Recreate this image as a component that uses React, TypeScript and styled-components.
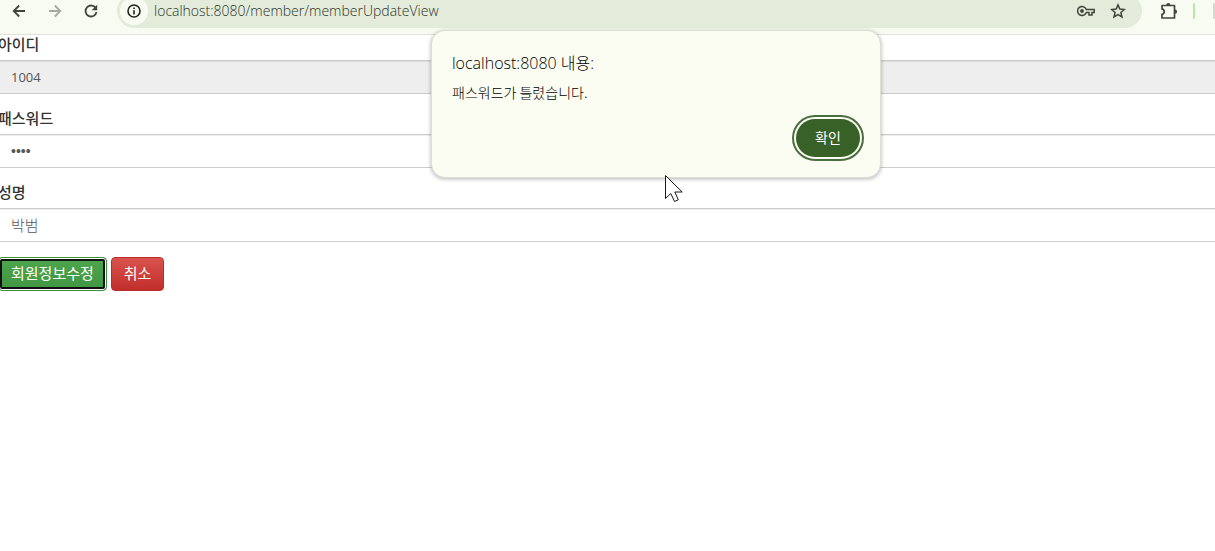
import React from "react";
import styled, { createGlobalStyle } from "styled-components";

const GlobalStyle = createGlobalStyle`
  * { box-sizing: border-box; }
  body {
    margin: 0;
    background: #fff;
    color: #333;
    font-family: "Open Sans", "Noto Sans CJK KR", sans-serif;
    font-size: 14px;
    line-height: 20px;
  }
`;

const Screen = styled.div`
  position: relative;
  min-height: 100vh;
  overflow: hidden;
`;

const Toolbar = styled.header`
  display: flex;
  align-items: flex-start;
  height: 41px;
  margin-top: -6px;
  padding-left: 1px;
  background: #f8fbf1;
  border-bottom: 1px solid #dee2d9;
`;

const IconButton = styled.button<{ $width?: number; $faded?: boolean }>`
  display: flex;
  flex: none;
  align-items: center;
  justify-content: center;
  width: ${(p) => p.$width ?? 36}px;
  height: 34px;
  padding: 0;
  border: 0;
  background: none;
  color: ${(p) => (p.$faded ? "#a5aaa0" : "#3f463c")};
`;

const AddressBar = styled.div`
  display: flex;
  flex: 1;
  align-items: center;
  height: 34px;
  margin-left: 8px;
  padding: 0 8px 0 3px;
  border-radius: 17px;
  background: #e3ecdb;
`;

const SiteInfo = styled.button`
  display: flex;
  flex: none;
  align-items: center;
  justify-content: center;
  width: 28px;
  height: 28px;
  padding: 0;
  border: 0;
  border-radius: 50%;
  background: #f8fbf1;
  color: #20251e;
`;

const Address = styled.input`
  flex: 1;
  min-width: 0;
  height: 28px;
  padding: 0 6px 2px;
  border: 0;
  outline: 0;
  background: none;
  color: #2c3229;
  font: 300 14px "Open Sans", sans-serif;
`;

const Extensions = styled.div`
  display: flex;
  align-items: center;
  height: 34px;
  padding-left: 9px;
`;

const Divider = styled.span<{ $color: string }>`
  width: 2px;
  height: 16px;
  margin-left: 7px;
  border-radius: 1px;
  background: ${(p) => p.$color};

  & + & { margin-left: 18px; }
`;

const Form = styled.form`
  margin: 0 -2px;
`;

const Field = styled.div`
  margin-bottom: 15px;
`;

const Label = styled.label`
  display: block;
  padding-bottom: 7px;
  font: 500 15px/18px "Noto Sans CJK KR", sans-serif;
`;

const Input = styled.input`
  display: block;
  width: 100%;
  height: 34px;
  padding: 6px 12px;
  border: 1px solid #ccc;
  border-radius: 0;
  outline: 0;
  background: #fff;
  box-shadow: inset 0 1px 1px rgba(0, 0, 0, 0.075);
  color: #555;
  font: 400 13px "Open Sans", sans-serif;

  &:read-only { background: #eee; }
  &[lang="ko"] {
    padding-bottom: 8px;
    font: 300 15px "Noto Sans CJK KR", sans-serif;
  }
  &[type="password"] { font: 400 14px "Liberation Sans", sans-serif; }
`;

const Actions = styled.div`
  display: flex;
  gap: 4px;
`;

const ActionButton = styled.button<{ $tone: "success" | "danger"; $focused?: boolean }>`
  height: 34px;
  padding: 0 12px 2px;
  border: 1px solid ${(p) => (p.$tone === "success" ? "#3e8f3e" : "#b92c28")};
  border-radius: 4px;
  background: ${(p) =>
    p.$tone === "success"
      ? "linear-gradient(#4da64d, #419641)"
      : "linear-gradient(#d9534f, #c12e2a)"};
  box-shadow: ${(p) => (p.$focused ? "inset 0 0 0 1px #fff, inset 0 0 0 3px #101010" : "none")};
  color: #fff;
  font: 400 15px/20px "Noto Sans CJK KR", sans-serif;
`;

const Dialog = styled.section`
  position: absolute;
  top: 30px;
  left: 431px;
  display: flex;
  flex-direction: column;
  width: 450px;
  height: 148px;
  padding: 22px 20px 20px;
  border: 1px solid #dcdfd5;
  border-radius: 14px;
  background: #fbfdf2;
  box-shadow: 0 1px 4px rgba(0, 0, 0, 0.3);
  color: #000;
`;

const DialogTitle = styled.h1`
  margin: 0 0 9px;
  font: 300 16px/20px "Open Sans", "Noto Sans CJK KR", sans-serif;
`;

const DialogText = styled.p`
  margin: 0;
  font: 300 14px/20px "Noto Sans CJK KR", sans-serif;
`;

const ConfirmButton = styled.button`
  align-self: flex-end;
  width: 64px;
  height: 38px;
  margin-top: auto;
  padding: 0 0 2px;
  border: 0;
  border-radius: 19px;
  outline: 2px solid #4a6f3f;
  outline-offset: 2px;
  background: #386128;
  color: #fff;
  font: 400 14px/20px "Noto Sans CJK KR", sans-serif;
`;

const Pointer = styled.svg`
  position: absolute;
  top: 174px;
  left: 664px;
`;

export default function App() {
  return (
    <Screen>
      <GlobalStyle />
      <Toolbar>
        <IconButton aria-label="뒤로">
          <svg width="14" height="14" viewBox="0 0 14 14" fill="none" stroke="currentColor" strokeWidth="1.8">
            <path d="M13 7H2M7.2 1.5 1.7 7l5.5 5.5" />
          </svg>
        </IconButton>
        <IconButton aria-label="앞으로" $faded>
          <svg width="14" height="14" viewBox="0 0 14 14" fill="none" stroke="currentColor" strokeWidth="1.8">
            <path d="M1 7h11M6.8 1.5 12.3 7l-5.5 5.5" />
          </svg>
        </IconButton>
        <IconButton aria-label="새로고침">
          <svg width="14" height="14" viewBox="0 0 14 14">
            <path d="M12 4.5A5.5 5.5 0 1 0 12.5 8" fill="none" stroke="currentColor" strokeWidth="1.8" />
            <path d="M13.2.7v5.6H7.6z" fill="currentColor" />
          </svg>
        </IconButton>
        <AddressBar>
          <SiteInfo aria-label="사이트 정보">
            <svg width="14" height="14" viewBox="0 0 14 14" fill="none" stroke="currentColor" strokeWidth="1.6">
              <circle cx="7" cy="7" r="6" />
              <path d="M7 6.2v4.2M7 3.5v1.6" />
            </svg>
          </SiteInfo>
          <Address
            aria-label="주소"
            defaultValue="localhost:8080/member/memberUpdateView"
            spellCheck={false}
          />
          <IconButton aria-label="비밀번호 관리" $width={32}>
            <svg width="18" height="12" viewBox="0 0 18 12" fill="none" stroke="currentColor" strokeWidth="1.5">
              <path d="M9.3 4.4A4.5 4.5 0 1 0 9.3 7.6H12V10h3V7.6h2.2V4.4z" />
              <circle cx="5" cy="6" r="1.9" fill="currentColor" stroke="none" />
            </svg>
          </IconButton>
          <IconButton aria-label="북마크" $width={32}>
            <svg width="16" height="16" viewBox="0 0 16 16" fill="none" stroke="currentColor" strokeWidth="1.5">
              <path d="m8 1.9 1.8 4.2 4.6.4-3.5 3 1.1 4.5-4-2.4L4 14l1.1-4.5-3.5-3 4.6-.4z" />
            </svg>
          </IconButton>
        </AddressBar>
        <Extensions>
          <IconButton aria-label="확장 프로그램" $width={35}>
            <svg width="18" height="18" viewBox="0 0 18 18">
              <path
                d="M2 3.5H14.5V16H2V12.4C4.9 11.7 4.9 7.6 2 6.9Z"
                fill="none"
                stroke="currentColor"
                strokeWidth="1.7"
                strokeLinejoin="round"
              />
              <path d="M6.2 3.2a2.1 2.1 0 0 1 4.2 0zM15 7.6a2.1 2.1 0 0 1 0 4.2z" fill="currentColor" />
            </svg>
          </IconButton>
          <Divider $color="#b9e9a6" />
          <Divider $color="#d5d9d2" />
        </Extensions>
      </Toolbar>

      <Form onSubmit={(e) => e.preventDefault()}>
        <Field>
          <Label htmlFor="userId">아이디</Label>
          <Input id="userId" type="text" defaultValue="1004" readOnly />
        </Field>
        <Field>
          <Label htmlFor="userPass">패스워드</Label>
          <Input id="userPass" type="password" defaultValue="1234" />
        </Field>
        <Field>
          <Label htmlFor="userName">성명</Label>
          <Input id="userName" type="text" lang="ko" defaultValue="박범" />
        </Field>
        <Actions>
          <ActionButton type="submit" $tone="success" $focused>회원정보수정</ActionButton>
          <ActionButton type="button" $tone="danger">취소</ActionButton>
        </Actions>
      </Form>

      <Dialog role="alertdialog" aria-labelledby="alertTitle" aria-describedby="alertText">
        <DialogTitle id="alertTitle">localhost:8080 내용:</DialogTitle>
        <DialogText id="alertText">패스워드가 틀렸습니다.</DialogText>
        <ConfirmButton type="button">확인</ConfirmButton>
      </Dialog>

      <Pointer width="20" height="29" viewBox="0 0 20 29" aria-hidden="true">
        <path
          d="M1.5 1.5V24.5L6.8 19.5 10.5 27.5 14.3 25.8 10.8 18H18.2Z"
          fill="#fff"
          stroke="#15151f"
          strokeWidth="1"
        />
      </Pointer>
    </Screen>
  );
}
